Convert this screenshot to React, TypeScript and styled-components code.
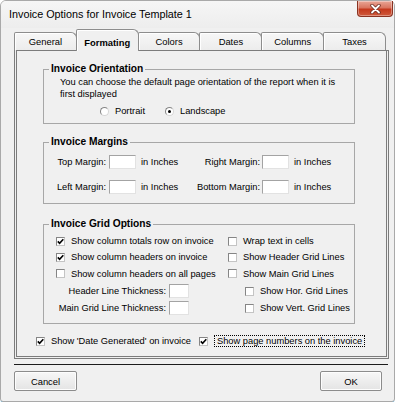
import styled, { createGlobalStyle } from 'styled-components';

const GlobalStyle = createGlobalStyle`
  body {
    margin: 0;
    background: #fff;
    font-family: 'Liberation Sans', Arial, sans-serif;
    color: #000;
  }
`;

const Window = styled.div`
  box-sizing: border-box;
  width: 395px;
  height: 402px;
  background: #f0f0f0;
  border: 1px solid #a9a9a9;
  border-radius: 6px 6px 3px 3px;
  box-shadow: 0 2px 1px -1px #4fb3ea;
  display: flex;
  flex-direction: column;
`;

const TitleBar = styled.div`
  display: flex;
  align-items: flex-start;
  justify-content: space-between;
  height: 27px;
  padding-left: 8px;
  background: linear-gradient(#f6f6f6, #ededed);
  border-radius: 5px 5px 0 0;
`;

const Title = styled.span`
  font-size: 10.8px;
  line-height: 27px;
`;

const CloseButton = styled.div`
  box-sizing: border-box;
  width: 36px;
  height: 16px;
  margin-right: 1px;
  border: 1px solid #8a3322;
  border-top: none;
  border-radius: 0 0 4px 4px;
  background: linear-gradient(#e9a696 0%, #d9755f 45%, #c5391d 55%, #cf5a3c 100%);
  box-shadow: inset 0 0 0 1px rgba(255, 255, 255, 0.35);
  display: flex;
  align-items: center;
  justify-content: center;
`;

const Body = styled.div`
  padding-left: 13px;
  display: flex;
  flex-direction: column;
`;

const TabStrip = styled.div`
  display: flex;
  align-items: flex-end;
  width: 372px;
  height: 21px;
  margin-top: 1px;
`;

const Tab = styled.div<{ $active?: boolean }>`
  box-sizing: border-box;
  flex: 1;
  height: ${(p) => (p.$active ? 22 : 18)}px;
  margin-bottom: ${(p) => (p.$active ? -1 : 0)}px;
  padding-top: ${(p) => (p.$active ? 3 : 0)}px;
  position: relative;
  z-index: ${(p) => (p.$active ? 1 : 0)};
  display: flex;
  align-items: center;
  justify-content: center;
  font-size: 9.4px;
  font-weight: ${(p) => (p.$active ? 'bold' : 'normal')};
  background: ${(p) => (p.$active ? '#f0f0f0' : 'linear-gradient(#f7f7f7, #ececec)')};
  border: 1px solid #8d8d8d;
  border-bottom: none;
  border-radius: 2px 6px 0 0;
  box-shadow: inset 1px 1px 0 #fff;
  & + & {
    margin-left: -1px;
  }
`;

const Panel = styled.div`
  box-sizing: border-box;
  width: 375px;
  height: 309px;
  border-style: double;
  border-color: #7c7c7c;
  border-width: 1px 3px 3px 3px;
  border-top-style: solid;
  background: #f0f0f0;
  padding-top: 11px;
  display: flex;
  flex-direction: column;
`;

const Group = styled.fieldset<{ $top: number; $bottom: number }>`
  margin: ${(p) => p.$top}px 31px 0 26px;
  padding: 0 0 ${(p) => p.$bottom}px 0;
  border: 1px solid #a7a7a7;
  min-width: 0;
`;

const Legend = styled.legend`
  margin-left: 5px;
  padding: 0 2px;
  font-size: 10.2px;
  font-weight: bold;
  line-height: 14px;
`;

const Note = styled.p`
  margin: 1px 0 0 16px;
  width: 282px;
  font-size: 9.3px;
  line-height: 11.5px;
`;

const RadioRow = styled.div`
  display: flex;
  align-items: center;
  gap: 20px;
  height: 14px;
  margin-top: 4px;
  padding-left: 56px;
`;

const Choice = styled.label`
  display: flex;
  align-items: center;
  gap: 6px;
  font-size: 9.3px;
`;

const RadioDot = styled.span<{ $on?: boolean }>`
  box-sizing: border-box;
  width: 9px;
  height: 9px;
  border-radius: 50%;
  background: #fff;
  border: 1px solid;
  border-color: #858585 #d6d6d6 #d6d6d6 #858585;
  display: flex;
  align-items: center;
  justify-content: center;
  &::after {
    content: '';
    width: 3px;
    height: 3px;
    border-radius: 50%;
    background: ${(p) => (p.$on ? '#000' : 'transparent')};
  }
`;

const MarginGrid = styled.div`
  display: grid;
  grid-template-columns: 62px 30px 60px 64px 29px auto;
  grid-auto-rows: 14px;
  row-gap: 11px;
  align-items: center;
  margin-top: 6px;
  font-size: 9.3px;
  white-space: nowrap;
`;

const FieldLabel = styled.span`
  justify-self: end;
`;

const Unit = styled.span`
  padding-left: 5px;
`;

const TextBox = styled.span<{ $w: number }>`
  box-sizing: border-box;
  justify-self: end;
  width: ${(p) => p.$w}px;
  height: 14px;
  background: #fff;
  border: 1px solid;
  border-color: #a3a3a3 #e2e2e2 #e2e2e2 #a3a3a3;
`;

const OptionsGrid = styled.div`
  display: grid;
  grid-template-columns: 172px auto;
  grid-template-rows: 16px 16px 17px 18px 16px;
  align-items: center;
  margin: 2px 0 0 12px;
  font-size: 9.3px;
  white-space: nowrap;
`;

const CheckItem = styled.label<{ $indent?: number }>`
  display: flex;
  align-items: center;
  gap: 6px;
  padding-left: ${(p) => p.$indent ?? 0}px;
`;

const Box = styled.span`
  box-sizing: border-box;
  width: 9px;
  height: 9px;
  flex: none;
  background: #fff;
  border: 1px solid;
  border-color: #858585 #c4c4c4 #c4c4c4 #858585;
  display: flex;
  align-items: center;
  justify-content: center;
`;

const ThicknessRow = styled.div`
  display: flex;
  align-items: center;
  gap: 3px;
`;

const ThicknessLabel = styled.span`
  width: 110px;
  text-align: right;
`;

const FooterChecks = styled.div`
  display: grid;
  grid-template-columns: 163px auto;
  align-items: center;
  height: 14px;
  margin: 10px 0 0 19px;
  font-size: 9.3px;
  white-space: nowrap;
`;

const FocusText = styled.span`
  border: 1px dotted #000;
  padding: 0 2px;
  line-height: 10px;
`;

const Separator = styled.div`
  width: 374px;
  margin-top: 5px;
  border-top: 1px solid #1c1c1c;
`;

const ButtonRow = styled.div`
  display: flex;
  justify-content: space-between;
  width: 368px;
  margin-top: 6px;
`;

const Button = styled.div<{ $w: number }>`
  box-sizing: border-box;
  width: ${(p) => p.$w}px;
  height: 20px;
  border: 1px solid #8c8c8c;
  border-radius: 2px;
  background: linear-gradient(#f7f7f7, #e4e4e4);
  box-shadow: inset 0 0 0 1px #fdfdfd;
  display: flex;
  align-items: center;
  justify-content: center;
  font-size: 9.4px;
`;

const Check = ({ on }: { on?: boolean }) => (
  <Box>
    {on && (
      <svg width="7" height="7" viewBox="0 0 7 7">
        <path d="M0.8 3.4 L2.6 5.3 L6.3 1.2" fill="none" stroke="#000" strokeWidth="1.6" />
      </svg>
    )}
  </Box>
);

const Option = (props: { label: string; on?: boolean; indent?: number }) => (
  <CheckItem $indent={props.indent}>
    <Check on={props.on} />
    {props.label}
  </CheckItem>
);

const tabs = ['General', 'Formating', 'Colors', 'Dates', 'Columns', 'Taxes'];

export default function App() {
  return (
    <>
      <GlobalStyle />
      <Window>
        <TitleBar>
          <Title>Invoice Options for Invoice Template 1</Title>
          <CloseButton>
            <svg width="13" height="10" viewBox="0 0 13 10">
              <path d="M3 1.5 L10 8.5 M10 1.5 L3 8.5" stroke="#6a2b20" strokeWidth="3.4" strokeLinecap="round" />
              <path d="M3 1.5 L10 8.5 M10 1.5 L3 8.5" stroke="#fff" strokeWidth="1.8" strokeLinecap="round" />
            </svg>
          </CloseButton>
        </TitleBar>
        <Body>
          <TabStrip>
            {tabs.map((t) => (
              <Tab key={t} $active={t === 'Formating'}>
                {t}
              </Tab>
            ))}
          </TabStrip>
          <Panel>
            <Group $top={0} $bottom={5}>
              <Legend>Invoice Orientation</Legend>
              <Note>
                You can choose the default page orientation of the report when it is first displayed
              </Note>
              <RadioRow>
                <Choice>
                  <RadioDot />
                  Portrait
                </Choice>
                <Choice>
                  <RadioDot $on />
                  Landscape
                </Choice>
              </RadioRow>
            </Group>

            <Group $top={11} $bottom={9}>
              <Legend>Invoice Margins</Legend>
              <MarginGrid>
                <FieldLabel>Top Margin:</FieldLabel>
                <TextBox $w={27} />
                <Unit>in Inches</Unit>
                <FieldLabel>Right Margin:</FieldLabel>
                <TextBox $w={27} />
                <Unit>in Inches</Unit>
                <FieldLabel>Left Margin:</FieldLabel>
                <TextBox $w={27} />
                <Unit>in Inches</Unit>
                <FieldLabel>Bottom Margin:</FieldLabel>
                <TextBox $w={27} />
                <Unit>in Inches</Unit>
              </MarginGrid>
            </Group>

            <Group $top={13} $bottom={7}>
              <Legend>Invoice Grid Options</Legend>
              <OptionsGrid>
                <Option label="Show column totals row on invoice" on />
                <Option label="Wrap text in cells" />
                <Option label="Show column headers on invoice" on />
                <Option label="Show Header Grid Lines" />
                <Option label="Show column headers on all pages" />
                <Option label="Show Main Grid Lines" />
                <ThicknessRow>
                  <ThicknessLabel>Header Line Thickness:</ThicknessLabel>
                  <TextBox $w={20} />
                </ThicknessRow>
                <Option label="Show Hor. Grid Lines" indent={17} />
                <ThicknessRow>
                  <ThicknessLabel>Main Grid Line Thickness:</ThicknessLabel>
                  <TextBox $w={20} />
                </ThicknessRow>
                <Option label="Show Vert. Grid Lines" indent={17} />
              </OptionsGrid>
            </Group>

            <FooterChecks>
              <CheckItem>
                <Check on />
                Show 'Date Generated' on invoice
              </CheckItem>
              <CheckItem>
                <Check on />
                <FocusText>Show page numbers on the invoice</FocusText>
              </CheckItem>
            </FooterChecks>
          </Panel>
          <Separator />
          <ButtonRow>
            <Button $w={63}>Cancel</Button>
            <Button $w={62}>OK</Button>
          </ButtonRow>
        </Body>
      </Window>
    </>
  );
}
